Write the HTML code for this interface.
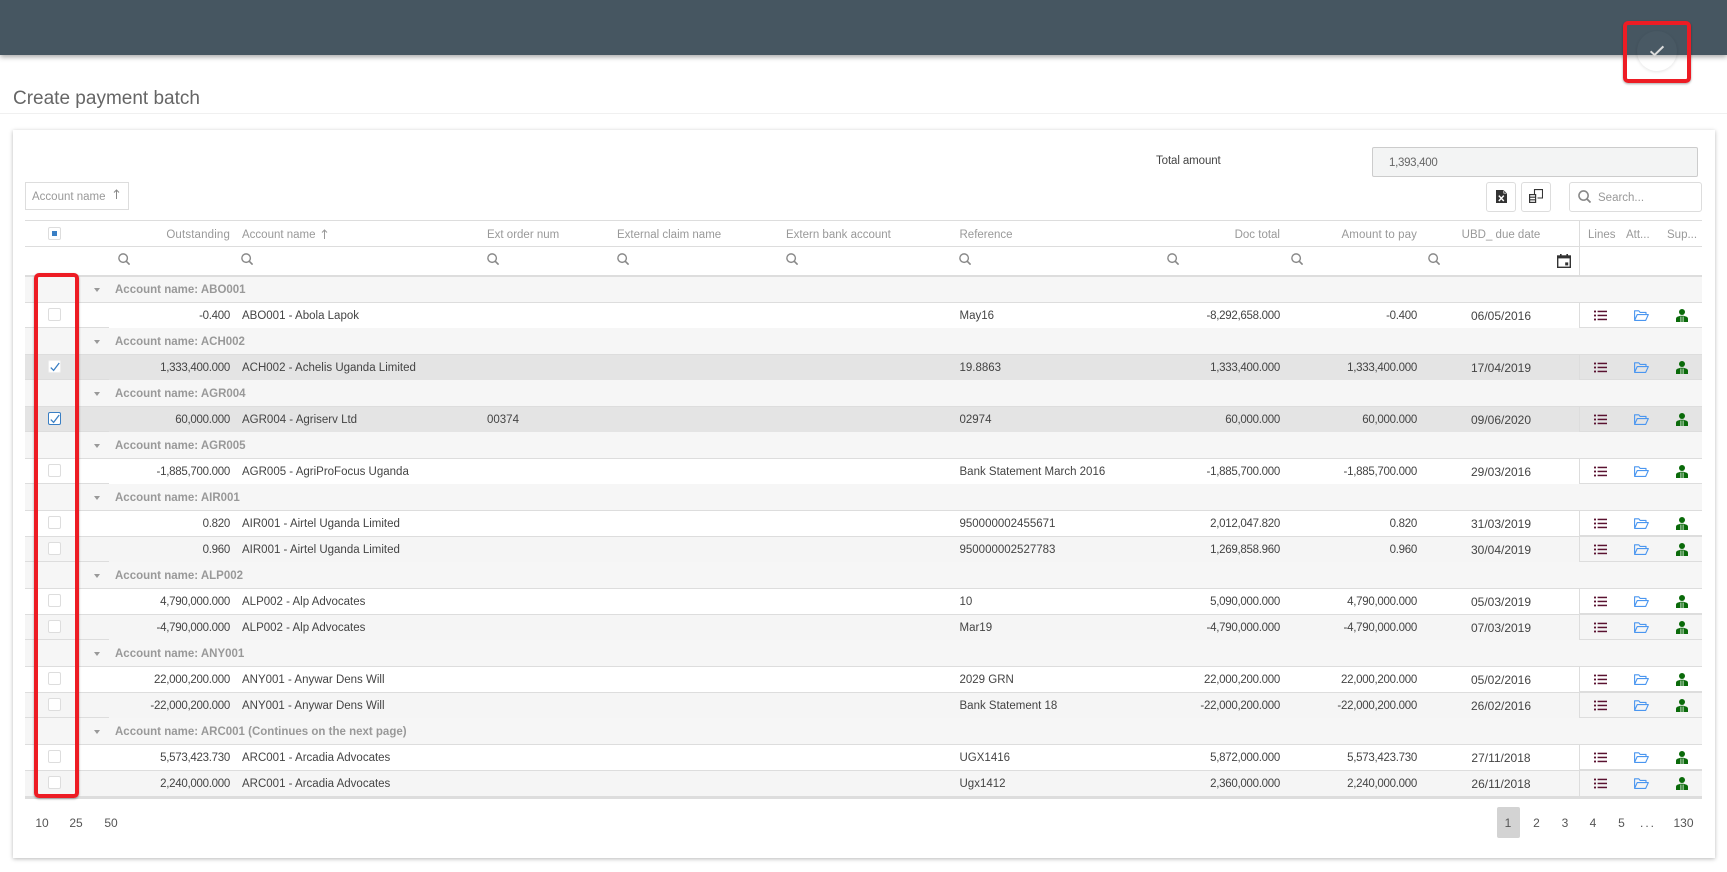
<!DOCTYPE html>
<html lang="en"><head><meta charset="utf-8"><title>Create payment batch</title>
<style>
*{box-sizing:border-box}
html,body{margin:0;padding:0;width:1727px;height:872px;overflow:hidden;background:#fff;font-family:"Liberation Sans",sans-serif;color:#444}
.abs,.hd,.s,.cap{position:absolute}
#top{position:absolute;left:0;top:0;width:1727px;height:55px;background:#465661;box-shadow:0 2px 5px rgba(0,0,0,.35)}
#fab{position:absolute;left:1637px;top:31px;width:40px;height:40px;border-radius:50%;background:rgba(255,255,255,.02);box-shadow:0 1px 3px rgba(0,0,0,.11)}
#title{position:absolute;left:13px;top:88px;font-size:19px;line-height:22px;color:#666}
#rule{position:absolute;left:0;top:113px;width:1727px;height:1px;background:#f0f0f0}
#card{position:absolute;left:13px;top:130px;width:1702px;height:728px;background:#fff;box-shadow:0 1px 4px rgba(0,0,0,.28)}
.btn{position:absolute;top:182px;height:30px;border:1px solid #ddd;border-radius:3px;background:#fff}
.hd{top:227px;font-size:11.5px;line-height:16px;color:#999;white-space:nowrap}
.line{position:absolute;background:#ddd}
.s{top:253px;width:12px;height:12px}
.r{position:absolute;left:25px;width:1677px;height:26px;font-size:11.5px;line-height:27px;color:#444;white-space:nowrap}
.g{background:#f6f6f6;font-weight:bold;color:#999;font-size:11.5px}
.g b{position:absolute;left:90px;top:1px;line-height:27px}
.g i{position:absolute;left:69px;top:12px;width:0;height:0;border-left:3px solid transparent;border-right:3px solid transparent;border-top:4px solid #999}
.w{background:#fff;border-top:1px solid #ddd}
.a{background:#f5f5f5;border-top:1px solid #ddd}
.x{background:#e4e4e4;border-top:1px solid #ddd}
.r span{position:absolute;top:0}
.o,.d,.p{text-align:right;letter-spacing:-.28px}
.o{right:1472px}.n{left:217px}.e{left:462px}.f{left:934.5px}.d{right:422px}.p{right:285px}
.u{left:1445.5px;width:61px;text-align:center;font-size:12px}
.r em{position:absolute;left:1554px;top:-1px;width:123px;height:26px;border-left:1px solid #ddd;border-bottom:1px solid #ddd}
.r u{position:absolute;left:0;top:-1px;width:84px;height:26px;border-bottom:1px solid #ddd}
.cb{position:absolute;left:23px;top:5px;width:13px;height:13px;border:1px solid #ddd;border-radius:2px;background:#fff}
.i1,.i2,.i3{position:absolute}
.i1{left:1569px;top:7px;width:13px;height:11px}
.i2{left:1609px;top:7px;width:15px;height:11px}
.i3{left:1651px;top:6px;width:12px;height:13px}
.red{position:absolute;border:4px solid #ed1c24;border-radius:5px;box-shadow:0 1px 2px rgba(0,0,0,.35)}
.pg{position:absolute;top:815px;width:24px;text-align:center;font-size:12px;line-height:16px;color:#555}
</style></head><body>
<svg width="0" height="0" style="position:absolute">
<symbol id="li" viewBox="0 0 13 11"><g fill="#5a1230"><rect x="0" y=".6" width="2" height="1.8"/><rect x="0" y="4.6" width="2" height="1.8"/><rect x="0" y="8.6" width="2" height="1.8"/><rect x="3.6" y=".7" width="9.4" height="1.5"/><rect x="3.6" y="4.7" width="9.4" height="1.5"/><rect x="3.6" y="8.7" width="9.4" height="1.5"/></g></symbol>
<symbol id="fo" viewBox="0 0 15 11"><path d="M.6 10.4V.8h4.2l1.3 1.6h5.9v2.2M.6 10.4L3.2 4.6h11.1l-2.6 5.8z" fill="none" stroke="#4a96f0" stroke-width="1.1" stroke-linejoin="round"/></symbol>
<symbol id="pe" viewBox="0 0 12 13"><circle cx="6" cy="3" r="3" fill="#0a6a0a"/><path d="M0 13V9.8Q0 7.6 3 7.2L4.6 6.8H7.4L9 7.2Q12 7.6 12 9.8V13z" fill="#0a6a0a"/><path d="M4.9 7.5V13M7.1 7.5V13" stroke="#e4efe4" stroke-width=".9"/></symbol>
<symbol id="se" viewBox="0 0 11 11"><circle cx="4.7" cy="4.7" r="3.9" fill="none" stroke="#888" stroke-width="1.3"/><path d="M7.6 7.6L10.6 10.6" stroke="#888" stroke-width="1.5"/></symbol>
</svg>

<div id="top"></div>
<div id="fab"></div>
<svg class="abs" style="left:1649px;top:45px" width="16" height="12" viewBox="0 0 16 12"><path d="M1.6 6.3L5.6 10L14.4 1.4" fill="none" stroke="#dcdcdc" stroke-width="2"/></svg>
<div id="title">Create payment batch</div>
<div id="rule"></div>
<div id="card"></div>

<div class="abs" style="left:1156px;top:153px;font-size:11.5px;line-height:16px;color:#444;letter-spacing:-.1px">Total amount</div>
<div class="abs" style="left:1372px;top:147px;width:326px;height:30px;background:#f3f4f4;border:1px solid #ccc;border-radius:2px;font-size:11.5px;line-height:31px;padding-left:16px;color:#666;letter-spacing:-.3px">1,393,400</div>

<div class="abs" style="left:25px;top:182px;width:104px;height:28px;border:1px solid #ddd;font-size:11.5px;line-height:28px;padding-left:6px;color:#999">Account name</div>
<svg class="abs" style="left:113px;top:189px" width="7" height="11" viewBox="0 0 7 11"><path d="M3.5 1V10M1 3.5L3.5 1L6 3.5" fill="none" stroke="#888" stroke-width="1"/></svg>

<div class="btn" style="left:1486px;width:30px"></div>
<svg class="abs" style="left:1496px;top:190px" width="11" height="13" viewBox="0 0 11 13"><path d="M0 0H7.5L11 3.5V13H0z" fill="#333"/><path d="M7.8 .6V3.2H10.4" fill="none" stroke="#fff" stroke-width=".7"/><path d="M2.8 5.6L7.8 11M7.8 5.6L2.8 11" stroke="#fff" stroke-width="1.4"/></svg>
<div class="btn" style="left:1521px;width:30px"></div>
<svg class="abs" style="left:1529px;top:189px" width="14" height="14" viewBox="0 0 14 14"><path d="M5.5 5V.6H13.5V9H8.5" fill="none" stroke="#333" stroke-width="1.1"/><rect x=".6" y="5.6" width="6" height="7.8" fill="none" stroke="#333" stroke-width="1.2"/><path d="M.6 8.2H6.6M.6 10.8H6.6" stroke="#333" stroke-width="1.1"/></svg>
<div class="btn" style="left:1569px;width:133px;font-size:11.5px;line-height:30px;padding-left:28px;color:#999">Search...</div>
<svg class="abs" style="left:1578px;top:190px" width="13" height="13"><use href="#se"/></svg>

<!-- table header -->
<div class="line" style="left:25px;top:220px;width:1677px;height:1px"></div>
<div class="line" style="left:25px;top:246px;width:1677px;height:1px"></div>
<div class="line" style="left:1579px;top:220px;width:1px;height:56px"></div>
<div class="abs" style="left:48px;top:227px;width:13px;height:13px;border:1px solid #ddd;border-radius:2px;background:#fff"></div>
<div class="abs" style="left:52px;top:231px;width:5px;height:5px;background:#3a7fc4"></div>
<div class="hd" style="right:1497px;letter-spacing:.15px">Outstanding</div>
<div class="hd" style="left:242px">Account name</div>
<svg class="abs" style="left:321px;top:229px" width="7" height="11" viewBox="0 0 7 11"><path d="M3.5 1V10M1 3.5L3.5 1L6 3.5" fill="none" stroke="#999" stroke-width="1"/></svg>
<div class="hd" style="left:487px">Ext order num</div>
<div class="hd" style="left:617px">External claim name</div>
<div class="hd" style="left:786px">Extern bank account</div>
<div class="hd" style="left:959.5px">Reference</div>
<div class="hd" style="right:447px">Doc total</div>
<div class="hd" style="right:310px;letter-spacing:.1px">Amount to pay</div>
<div class="hd" style="left:1431px;width:140px;text-align:center">UBD_ due date</div>
<div class="hd" style="left:1588px">Lines</div>
<div class="hd" style="left:1626px">Att...</div>
<div class="hd" style="left:1667px">Sup...</div>
<svg class="s" style="left:118px"><use href="#se"/></svg>
<svg class="s" style="left:241px"><use href="#se"/></svg>
<svg class="s" style="left:487px"><use href="#se"/></svg>
<svg class="s" style="left:617px"><use href="#se"/></svg>
<svg class="s" style="left:786px"><use href="#se"/></svg>
<svg class="s" style="left:959px"><use href="#se"/></svg>
<svg class="s" style="left:1167px"><use href="#se"/></svg>
<svg class="s" style="left:1291px"><use href="#se"/></svg>
<svg class="s" style="left:1428px"><use href="#se"/></svg>
<svg class="abs" style="left:1557px;top:254px" width="14" height="14" viewBox="0 0 14 14"><rect x=".7" y="2" width="12.6" height="11.3" fill="#fff" stroke="#333" stroke-width="1.4"/><rect x=".7" y="2" width="12.6" height="2.4" fill="#333"/><rect x="3" y="0" width="1.6" height="2.5" fill="#333"/><rect x="9.4" y="0" width="1.6" height="2.5" fill="#333"/><rect x="8.2" y="8.4" width="3" height="3" fill="#333"/></svg>

<!-- rows -->
<div class="r g" style="top:276px"><i></i><b>Account name: ABO001</b></div>
<div class="r w" style="top:302px"><u></u><div class="cb"></div><span class="o">-0.400</span><span class="n">ABO001 - Abola Lapok</span><span class="f">May16</span><span class="d">-8,292,658.000</span><span class="p">-0.400</span><span class="u">06/05/2016</span><em></em><svg class="i1"><use href="#li"/></svg><svg class="i2"><use href="#fo"/></svg><svg class="i3"><use href="#pe"/></svg></div>
<div class="r g" style="top:328px"><i></i><b>Account name: ACH002</b></div>
<div class="r x" style="top:354px"><u></u><div class="cb" style="border-color:#eee"><svg class="abs" style="left:1px;top:1px" width="10" height="10" viewBox="0 0 10 10"><path d="M.8 5.6L3.6 8.4L9.2 1" fill="none" stroke="#3a7fc4" stroke-width="1.3"/></svg></div><span class="o">1,333,400.000</span><span class="n">ACH002 - Achelis Uganda Limited</span><span class="f">19.8863</span><span class="d">1,333,400.000</span><span class="p">1,333,400.000</span><span class="u">17/04/2019</span><em></em><svg class="i1"><use href="#li"/></svg><svg class="i2"><use href="#fo"/></svg><svg class="i3"><use href="#pe"/></svg></div>
<div class="r g" style="top:380px"><i></i><b>Account name: AGR004</b></div>
<div class="r x" style="top:406px"><u></u><div class="cb" style="border-color:#3a7fc4"><svg class="abs" style="left:1px;top:1px" width="10" height="10" viewBox="0 0 10 10"><path d="M.8 5.6L3.6 8.4L9.2 1" fill="none" stroke="#3a7fc4" stroke-width="1.3"/></svg></div><span class="o">60,000.000</span><span class="n">AGR004 - Agriserv Ltd</span><span class="e">00374</span><span class="f">02974</span><span class="d">60,000.000</span><span class="p">60,000.000</span><span class="u">09/06/2020</span><em></em><svg class="i1"><use href="#li"/></svg><svg class="i2"><use href="#fo"/></svg><svg class="i3"><use href="#pe"/></svg></div>
<div class="r g" style="top:432px"><i></i><b>Account name: AGR005</b></div>
<div class="r w" style="top:458px"><u></u><div class="cb"></div><span class="o">-1,885,700.000</span><span class="n">AGR005 - AgriProFocus Uganda</span><span class="f">Bank Statement March 2016</span><span class="d">-1,885,700.000</span><span class="p">-1,885,700.000</span><span class="u">29/03/2016</span><em></em><svg class="i1"><use href="#li"/></svg><svg class="i2"><use href="#fo"/></svg><svg class="i3"><use href="#pe"/></svg></div>
<div class="r g" style="top:484px"><i></i><b>Account name: AIR001</b></div>
<div class="r w" style="top:510px"><div class="cb"></div><span class="o">0.820</span><span class="n">AIR001 - Airtel Uganda Limited</span><span class="f">950000002455671</span><span class="d">2,012,047.820</span><span class="p">0.820</span><span class="u">31/03/2019</span><em></em><svg class="i1"><use href="#li"/></svg><svg class="i2"><use href="#fo"/></svg><svg class="i3"><use href="#pe"/></svg></div>
<div class="r a" style="top:536px"><u></u><div class="cb"></div><span class="o">0.960</span><span class="n">AIR001 - Airtel Uganda Limited</span><span class="f">950000002527783</span><span class="d">1,269,858.960</span><span class="p">0.960</span><span class="u">30/04/2019</span><em></em><svg class="i1"><use href="#li"/></svg><svg class="i2"><use href="#fo"/></svg><svg class="i3"><use href="#pe"/></svg></div>
<div class="r g" style="top:562px"><i></i><b>Account name: ALP002</b></div>
<div class="r w" style="top:588px"><div class="cb"></div><span class="o">4,790,000.000</span><span class="n">ALP002 - Alp Advocates</span><span class="f">10</span><span class="d">5,090,000.000</span><span class="p">4,790,000.000</span><span class="u">05/03/2019</span><em></em><svg class="i1"><use href="#li"/></svg><svg class="i2"><use href="#fo"/></svg><svg class="i3"><use href="#pe"/></svg></div>
<div class="r a" style="top:614px"><u></u><div class="cb"></div><span class="o">-4,790,000.000</span><span class="n">ALP002 - Alp Advocates</span><span class="f">Mar19</span><span class="d">-4,790,000.000</span><span class="p">-4,790,000.000</span><span class="u">07/03/2019</span><em></em><svg class="i1"><use href="#li"/></svg><svg class="i2"><use href="#fo"/></svg><svg class="i3"><use href="#pe"/></svg></div>
<div class="r g" style="top:640px"><i></i><b>Account name: ANY001</b></div>
<div class="r w" style="top:666px"><div class="cb"></div><span class="o">22,000,200.000</span><span class="n">ANY001 - Anywar Dens Will</span><span class="f">2029 GRN</span><span class="d">22,000,200.000</span><span class="p">22,000,200.000</span><span class="u">05/02/2016</span><em></em><svg class="i1"><use href="#li"/></svg><svg class="i2"><use href="#fo"/></svg><svg class="i3"><use href="#pe"/></svg></div>
<div class="r a" style="top:692px"><u></u><div class="cb"></div><span class="o">-22,000,200.000</span><span class="n">ANY001 - Anywar Dens Will</span><span class="f">Bank Statement 18</span><span class="d">-22,000,200.000</span><span class="p">-22,000,200.000</span><span class="u">26/02/2016</span><em></em><svg class="i1"><use href="#li"/></svg><svg class="i2"><use href="#fo"/></svg><svg class="i3"><use href="#pe"/></svg></div>
<div class="r g" style="top:718px"><i></i><b>Account name: ARC001 (Continues on the next page)</b></div>
<div class="r w" style="top:744px"><div class="cb"></div><span class="o">5,573,423.730</span><span class="n">ARC001 - Arcadia Advocates</span><span class="f">UGX1416</span><span class="d">5,872,000.000</span><span class="p">5,573,423.730</span><span class="u">27/11/2018</span><em></em><svg class="i1"><use href="#li"/></svg><svg class="i2"><use href="#fo"/></svg><svg class="i3"><use href="#pe"/></svg></div>
<div class="r a" style="top:770px"><div class="cb"></div><span class="o">2,240,000.000</span><span class="n">ARC001 - Arcadia Advocates</span><span class="f">Ugx1412</span><span class="d">2,360,000.000</span><span class="p">2,240,000.000</span><span class="u">26/11/2018</span><em style="border-bottom:0"></em><svg class="i1"><use href="#li"/></svg><svg class="i2"><use href="#fo"/></svg><svg class="i3"><use href="#pe"/></svg></div>
<div class="line" style="left:25px;top:275px;width:1677px;height:2px"></div>
<div class="line" style="left:25px;top:796px;width:1677px;height:3px"></div>

<!-- footer -->
<div class="pg" style="left:30px">10</div>
<div class="pg" style="left:64px">25</div>
<div class="pg" style="left:99px">50</div>
<div class="abs" style="left:1497px;top:807px;width:23px;height:31px;background:#d3d3d3;border-radius:2px"></div>
<div class="pg" style="left:1496px">1</div>
<div class="pg" style="left:1524.5px">2</div>
<div class="pg" style="left:1553px">3</div>
<div class="pg" style="left:1581px">4</div>
<div class="pg" style="left:1609.5px">5</div>
<div class="pg" style="left:1636px;letter-spacing:2px">...</div>
<div class="pg" style="left:1671.5px">130</div>

<div class="red" style="left:34px;top:273px;width:45px;height:525px"></div>
<div class="red" style="left:1623px;top:21px;width:68px;height:62px"></div>
</body></html>
